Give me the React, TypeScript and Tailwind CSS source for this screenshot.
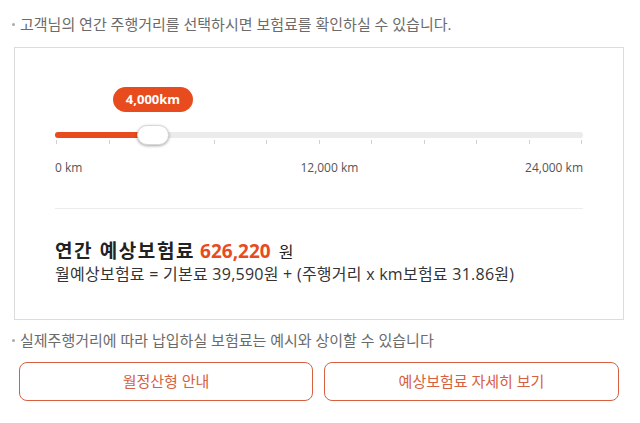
import React from "react";

const ORANGE = "#e84c1e";

export default function App() {
  const ticks = Array.from({ length: 11 }, (_, i) => i);
  return (
    <div
      className="w-[640px] h-[423px] bg-white overflow-hidden"
      style={{ fontFamily: "'Open Sans', 'Noto Sans CJK KR', sans-serif" }}
    >
      <p className="pt-[14px] pl-[12px] text-[15px] leading-[20px] text-[#6b6b6b] flex items-center">
        <span className="w-[3px] h-[3px] rounded-full bg-[#aaa] mr-[5px]" />
        고객님의 연간 주행거리를 선택하시면 보험료를 확인하실 수 있습니다.
      </p>
      <div className="mt-[13px] ml-[14px] w-[610px] h-[273px] border border-[#dcdcdc] px-[40px] pt-[39px]">
        <div className="ml-[58px] w-[80px] h-[25px] rounded-full bg-[#e84c1e] text-white text-[13px] font-bold flex items-center justify-center">
          4,000km
        </div>
        <div className="relative mt-[20px] h-[6px] w-[528px] rounded-full bg-[#ebebeb]">
          <div className="absolute left-0 top-0 h-[6px] w-[98px] rounded-full" style={{ background: ORANGE }} />
          <div className="absolute left-[1px] top-[8px] w-[526px] flex justify-between">
            {ticks.map((t) => (
              <span key={t} className="w-px h-[4px] bg-[#d0d0d0]" />
            ))}
          </div>
          <div className="absolute left-[82px] top-[-7px] w-[32px] h-[20px] rounded-full bg-white border border-[#d8d8d8] shadow-[0_1px_3px_rgba(0,0,0,0.35)]" />
        </div>
        <div className="mt-[22px] flex text-[12px] leading-[16px] text-[#555]">
          <span>0 km</span>
          <span className="ml-[218px]">12,000 km</span>
          <span className="ml-auto">24,000 km</span>
        </div>
        <div className="mt-[32px] h-px bg-[#ececec]" />
        <div className="mt-[30px] text-[19px] leading-[24px] font-bold text-[#222] flex items-baseline">
          <span className="tracking-[1.6px]">연간 예상보험료</span>
          <span className="ml-[5px]" style={{ color: ORANGE }}>626,220</span>
          <span className="ml-[8px] font-normal text-[16px]">원</span>
        </div>
        <p className="text-[16px] leading-[20px] tracking-[0.25px] text-[#333]">
          월예상보험료 = 기본료 39,590원 + (주행거리 x km보험료 31.86원)
        </p>
      </div>
      <p className="mt-[10px] pl-[12px] text-[15px] leading-[20px] text-[#6b6b6b] flex items-center">
        <span className="w-[3px] h-[3px] rounded-full bg-[#aaa] mr-[5px]" />
        실제주행거리에 따라 납입하실 보험료는 예시와 상이할 수 있습니다
      </p>
      <div className="mt-[12px] ml-[19px] w-[600px] flex gap-[11px]">
        <button className="w-[294px] h-[39px] rounded-[8px] border border-[#d6603f] text-[#d6603f] text-[15px]">
          월정산형 안내
        </button>
        <button className="w-[295px] h-[39px] rounded-[8px] border border-[#d6603f] text-[#d6603f] text-[15px]">
          예상보험료 자세히 보기
        </button>
      </div>
    </div>
  );
}
